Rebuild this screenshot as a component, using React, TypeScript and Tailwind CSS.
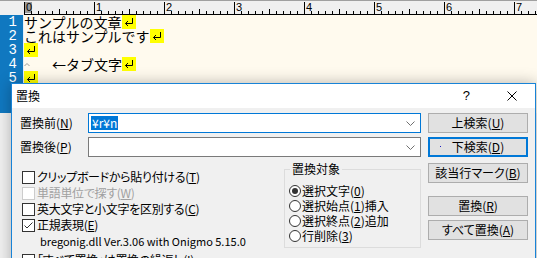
import React from "react";
import clsx from "clsx";

const ui = "font-['Noto_Sans_CJK_JP',sans-serif] [font-feature-settings:'palt'] text-[12px] text-black";

function Ruler() {
  const ticks = Array.from({ length: 74 }, (_, i) => i);
  return (
    <svg width="537" height="15" className="block">
      <rect width="537" height="15" fill="#f0f0f0" />
      <line x1="0" y1="0.5" x2="537" y2="0.5" stroke="#a0a0a0" />
      <rect x="24" y="2" width="8" height="11" fill="#9a9a9a" />
      {ticks.map((i) => {
        const x = 24.5 + i * 7;
        const top = i % 10 === 0 ? 2 : i % 5 === 0 ? 9 : 11;
        return <line key={i} x1={x} y1={top} x2={x} y2={14} stroke="#000" />;
      })}
      {[0, 1, 2, 3, 4, 5, 6, 7].map((n) => (
        <text
          key={n}
          x={26 + n * 70}
          y={11}
          fontSize="11"
          fontFamily="Liberation Sans, sans-serif"
          fill="#000"
        >
          {n}
        </text>
      ))}
      <line x1="24" y1="14.5" x2="537" y2="14.5" stroke="#000" />
    </svg>
  );
}

function ReturnMark() {
  return (
    <span className="inline-flex h-[14px] w-[14px] bg-[#ffff00]">
      <svg width="14" height="14" viewBox="0 0 14 14">
        <path d="M10.5 3v5.5H3.5M6 6l-2.5 2.5L6 11" fill="none" stroke="#000" />
      </svg>
    </span>
  );
}

function Editor() {
  const lines: React.ReactNode[] = [
    <>サンプルの文章<ReturnMark /></>,
    <>これはサンプルです<ReturnMark /></>,
    <ReturnMark />,
    <>
      <span className="inline-flex w-[28px]">
        <svg width="6" height="5" viewBox="0 0 6 5">
          <path d="M0.5 4L3 1.5L5.5 4" fill="none" stroke="#9a9a9a" />
        </svg>
      </span>
      ←タブ文字<ReturnMark />
    </>,
    <ReturnMark />,
    null,
    null,
  ];
  return (
    <div className="flex flex-col">
      <Ruler />
      <div className="flex h-[98px]">
        <div className="flex w-[24px] flex-col border-r border-[#e4eef8] bg-[#1078c0] pr-[6px] font-['Liberation_Mono',monospace] text-[14px] leading-[14px] text-white">
          {[1, 2, 3, 4, 5, 6, 7].map((n) => (
            <div key={n} className="h-[14px] text-right">
              {n <= 5 ? n : ""}
            </div>
          ))}
        </div>
        <div className="flex flex-1 flex-col bg-[#fffaee] font-['Noto_Sans_CJK_JP',sans-serif] text-[14px] leading-[14px] text-black">
          {lines.map((l, i) => (
            <div key={i} className="flex h-[14px] items-center whitespace-pre">
              {l}
            </div>
          ))}
        </div>
      </div>
    </div>
  );
}

function U({ children }: { children: React.ReactNode }) {
  return <span className="underline underline-offset-[1px]">{children}</span>;
}

function Chevron() {
  return (
    <svg width="9" height="5" viewBox="0 0 9 5" className="ml-auto mr-[5px]">
      <path d="M0.5 0.5L4.5 4.5L8.5 0.5" fill="none" stroke="#707070" />
    </svg>
  );
}

function Btn({
  children,
  primary,
  className,
}: {
  children: React.ReactNode;
  primary?: boolean;
  className?: string;
}) {
  return (
    <div
      className={clsx(
        "relative flex h-[20px] items-center justify-center bg-[#e1e1e1] leading-[16px]",
        primary ? "border-2 border-[#0078d7]" : "border border-[#adadad]",
        className,
      )}
    >
      {primary && <span className="absolute left-[10px] top-[7px] h-[1px] w-[1px] bg-[#2020c0]" />}
      {children}
    </div>
  );
}

function Check({
  children,
  checked,
  disabled,
}: {
  children: React.ReactNode;
  checked?: boolean;
  disabled?: boolean;
}) {
  return (
    <div className={clsx("flex h-[16px] items-center leading-[16px]", disabled && "text-[#a0a0a0]")}>
      <span
        className={clsx(
          "flex h-[13px] w-[13px] shrink-0 border bg-white",
          disabled ? "border-[#cccccc]" : "border-[#333333]",
        )}
      >
        {checked && (
          <svg width="11" height="11" viewBox="0 0 11 11">
            <path d="M1.5 5.5L4 8L9.5 2.5" fill="none" stroke="#333333" />
          </svg>
        )}
      </span>
      <span className="ml-[2px] whitespace-nowrap tracking-[-0.3px]">{children}</span>
    </div>
  );
}

function Radio({ children, checked }: { children: React.ReactNode; checked?: boolean }) {
  return (
    <div className="flex h-[15px] items-center leading-[15px]">
      <span className="flex h-[12px] w-[12px] shrink-0 items-center justify-center rounded-full border border-[#333333] bg-white">
        {checked && <span className="h-[6px] w-[6px] rounded-full bg-[#333333]" />}
      </span>
      <span className="ml-[1px] whitespace-nowrap">{children}</span>
    </div>
  );
}

function ReplaceDialog() {
  return (
    <div
      className={clsx(
        "absolute left-[11px] top-[83px] h-[200px] w-[525px] border border-[#1883d7] bg-[#f0f0f0] shadow-[0_0_14px_rgba(0,0,0,0.28)]",
        ui,
      )}
    >
      {/* Title bar */}
      <div className="flex h-[24px] items-center bg-white pl-[4px] pr-[18px]">
        <span>置換</span>
        <span className="ml-auto font-['Liberation_Sans',sans-serif] text-[13px]">?</span>
        <svg width="10" height="10" viewBox="0 0 10 10" className="ml-[37px]">
          <path d="M0.5 0.5L9.5 9.5M9.5 0.5L0.5 9.5" stroke="#000" />
        </svg>
      </div>

      {/* Body */}
      <div className="flex gap-[7px] pl-[8px] pr-[7px] pt-[5px]">
        <div className="flex flex-1 flex-col">
          <div className="flex h-[20px] items-center">
            <span className="w-[68px]">
              置換前(<U>N</U>)
            </span>
            <div className="flex h-[20px] flex-1 items-center border border-[#0078d7] bg-white pl-[2px]">
              <span className="bg-[#0078d7] px-[1px] leading-[14px] text-white">¥r¥n</span>
              <Chevron />
            </div>
          </div>
          <div className="mt-[4px] flex h-[20px] items-center">
            <span className="w-[68px]">
              置換後(<U>P</U>)
            </span>
            <div className="flex h-[20px] flex-1 items-center border border-[#7a7a7a] bg-white">
              <Chevron />
            </div>
          </div>

          <div className="mt-[4px] flex">
            <div className="flex flex-1 flex-col pl-[2px] pt-[8px]">
              <Check>
                クリップボードから貼り付ける(<U>T</U>)
              </Check>
              <Check disabled>
                単語単位で探す(<U>W</U>)
              </Check>
              <Check>
                英大文字と小文字を区別する(<U>C</U>)
              </Check>
              <Check checked>
                正規表現(<U>E</U>)
              </Check>
              <div className="flex h-[16px] items-center whitespace-nowrap pl-[18px] text-[11px] leading-[16px]">
                bregonig.dll Ver.3.06 with Onigmo 5.15.0
              </div>
              <div className="mt-[3px]">
                <Check>
                  「すべて置換」は置換の繰返し(<U>I</U>)
                </Check>
              </div>
            </div>
            <fieldset className="h-[87px] w-[137px] border border-[#dcdcdc] px-[4px] pb-[4px]">
              <legend className="ml-[1px] px-[2px] leading-[16px]">置換対象</legend>
              <div className="mt-[6px] flex flex-col">
                <Radio checked>
                  選択文字(<U>0</U>)
                </Radio>
                <Radio>
                  選択始点(<U>1</U>)挿入
                </Radio>
                <Radio>
                  選択終点(<U>2</U>)追加
                </Radio>
                <Radio>
                  行削除(<U>3</U>)
                </Radio>
              </div>
            </fieldset>
          </div>
        </div>

        <div className="flex w-[100px] flex-col">
          <Btn>
            上検索(<U>U</U>)
          </Btn>
          <Btn primary className="mt-[4px]">
            下検索(<U>D</U>)
          </Btn>
          <Btn className="mt-[6px]">
            該当行マーク(<U>B</U>)
          </Btn>
          <Btn className="mt-[13px] h-[18px]">
            置換(<U>R</U>)
          </Btn>
          <Btn className="mt-[4px] h-[18px]">
            すべて置換(<U>A</U>)
          </Btn>
        </div>
      </div>
    </div>
  );
}

export default function App() {
  return (
    <div className="relative flex h-[258px] w-[537px] flex-col overflow-hidden bg-[#f0f0f0]">
      <Editor />
      <ReplaceDialog />
    </div>
  );
}
